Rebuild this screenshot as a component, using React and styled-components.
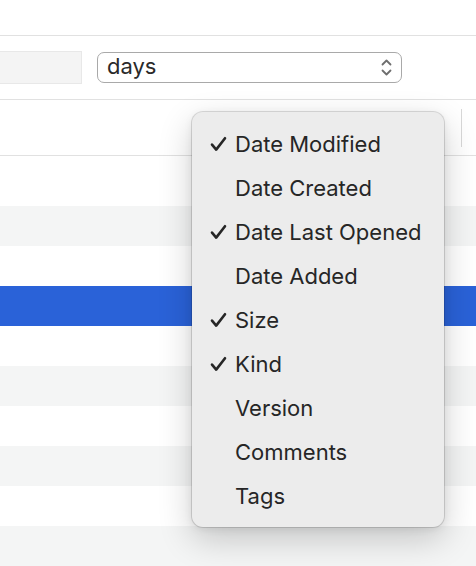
import React from "react";
import styled, { createGlobalStyle } from "styled-components";

const Global = createGlobalStyle`
  html, body { margin: 0; padding: 0; background: #ffffff; }
  body { font-family: Inter, "Noto Sans", "Liberation Sans", sans-serif; -webkit-font-smoothing: antialiased; }
  #root { width: 476px; height: 566px; overflow: hidden; }
`;

const Window = styled.div`
  position: relative;
  width: 476px;
  height: 566px;
  display: flex;
  flex-direction: column;
  background: #fff;
  overflow: hidden;
`;

const TopBar = styled.div`
  height: 35px;
  flex: none;
  border-bottom: 1px solid #e1e1e1;
`;

const Toolbar = styled.div`
  height: 63px;
  flex: none;
  display: flex;
  align-items: center;
  border-bottom: 1px solid #e1e1e1;
`;

const Field = styled.div`
  width: 82px;
  height: 33px;
  box-sizing: border-box;
  background: #f4f4f4;
  border: 1px solid #e8e8e8;
  border-left: none;
`;

const Select = styled.div`
  margin-left: 15px;
  margin-top: -1px;
  width: 305px;
  height: 31px;
  box-sizing: border-box;
  border: 1.5px solid #a9a9a9;
  border-radius: 7px;
  display: flex;
  align-items: center;
  justify-content: space-between;
  padding: 0 8px 0 9px;
  font-size: 22px;
  color: #2a2a2a;
`;

const SelectText = styled.span`
  margin-top: -2px;
`;

const Header = styled.div`
  height: 55px;
  flex: none;
  display: flex;
  justify-content: flex-end;
  align-items: center;
  border-bottom: 1px solid #e1e1e1;
  padding-right: 14px;
`;

const Divider = styled.div`
  width: 1px;
  height: 38px;
  background: #d8d8d8;
`;

const Rows = styled.div`
  display: flex;
  flex-direction: column;
`;

const Row = styled.div`
  height: ${(p) => p.$h || 40}px;
  flex: none;
  background: ${(p) =>
    p.$selected ? "#2a62d8" : p.$alt ? "#f4f5f5" : "#ffffff"};
`;

const Menu = styled.div`
  position: absolute;
  left: 192px;
  top: 112px;
  width: 252px;
  height: 415px;
  box-sizing: border-box;
  padding: 10px 0;
  background: #ececec;
  border-radius: 11px;
  box-shadow: 0 0 0 1px rgba(0, 0, 0, 0.13), 0 12px 34px rgba(0, 0, 0, 0.2),
    0 2px 8px rgba(0, 0, 0, 0.08);
  display: flex;
  flex-direction: column;
`;

const Item = styled.div`
  height: 44px;
  flex: none;
  display: flex;
  align-items: center;
  font-size: 22px;
  color: #262626;
`;

const Check = styled.span`
  width: 43px;
  flex: none;
  display: flex;
  justify-content: flex-end;
  padding-right: 8px;
  box-sizing: border-box;
`;

const Label = styled.span`
  margin-top: 0;
`;

const CheckIcon = () => (
  <svg width="17" height="16" viewBox="0 0 17 16">
    <path
      d="M2 8.6 L6.2 13.6 L15 2.2"
      fill="none"
      stroke="#262626"
      strokeWidth="2.6"
      strokeLinecap="round"
      strokeLinejoin="round"
    />
  </svg>
);

const Chevrons = () => (
  <svg width="13" height="19" viewBox="0 0 13 19">
    <path
      d="M2.5 6.5 L6.5 2.5 L10.5 6.5 M2.5 12.5 L6.5 16.5 L10.5 12.5"
      fill="none"
      stroke="#6e6e6e"
      strokeWidth="1.8"
      strokeLinecap="round"
      strokeLinejoin="round"
    />
  </svg>
);

const items = [
  ["Date Modified", true],
  ["Date Created", false],
  ["Date Last Opened", true],
  ["Date Added", false],
  ["Size", true],
  ["Kind", true],
  ["Version", false],
  ["Comments", false],
  ["Tags", false],
];

const rows = [
  { h: 50 },
  { alt: true },
  {},
  { selected: true },
  {},
  { alt: true },
  {},
  { alt: true },
  {},
  { alt: true },
];

export default function App() {
  return (
    <>
      <Global />
      <Window>
        <TopBar />
        <Toolbar>
          <Field />
          <Select>
            <SelectText>days</SelectText>
            <Chevrons />
          </Select>
        </Toolbar>
        <Header>
          <Divider />
        </Header>
        <Rows>
          {rows.map((r, i) => (
            <Row key={i} $h={r.h} $alt={r.alt} $selected={r.selected} />
          ))}
        </Rows>
        <Menu>
          {items.map(([label, checked]) => (
            <Item key={label}>
              <Check>{checked && <CheckIcon />}</Check>
              <Label>{label}</Label>
            </Item>
          ))}
        </Menu>
      </Window>
    </>
  );
}
